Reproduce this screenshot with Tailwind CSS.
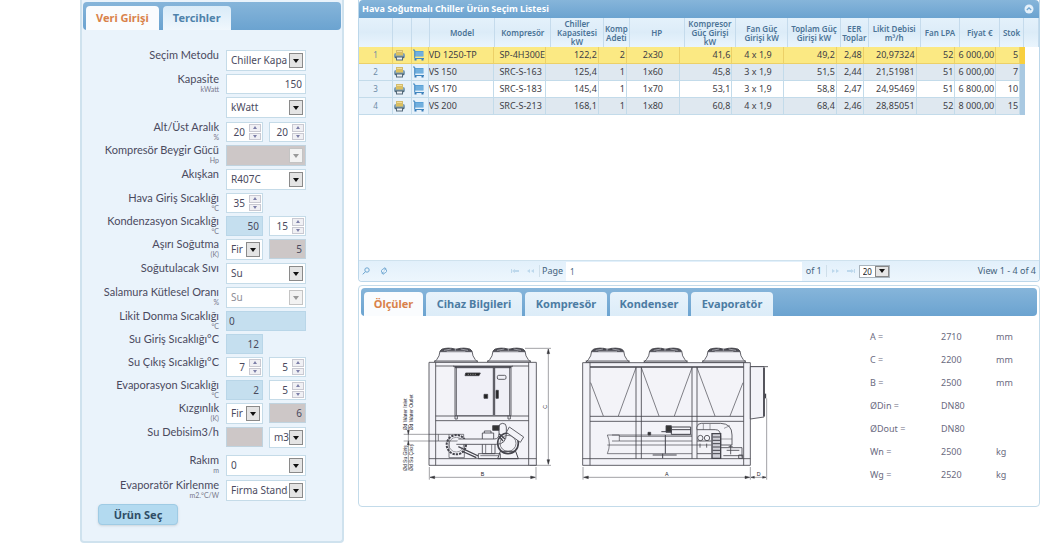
<!DOCTYPE html>
<html lang="tr">
<head>
<meta charset="utf-8">
<title>Chiller Seçim</title>
<script src="https://cdn.jsdelivr.net/npm/@tailwindcss/browser@4"></script>
</head>
<body class="bg-white font-['Noto_Sans',sans-serif] text-[#4a4a5e]">
<svg class="hidden">
  <symbol id="printer" viewBox="0 0 12 12">
    <path d="M2.500 1h7v4h-7z" fill="#d3bc6c"/><path d="M3.500 2h5v1h-5z" fill="#f2dd98"/>
    <rect x="0.500" y="4" width="11" height="5.500" rx="2" fill="#7f9fb5"/><path d="M2.500 4h7v2.500h-7z" fill="#dcc05e"/>
    <path d="M1.500 7.500h9v1.500h-9z" fill="#4f6472"/><path d="M2.500 8.500h7v3h-7z" fill="#54697a"/><path d="M3.500 8.500h5v2h-5z" fill="#eef3f7"/>
  </symbol>
  <symbol id="cart" viewBox="0 0 12 12">
    <path d="M2.500 2h8.500v5.500H2.500z" fill="#5aa2d8"/><path d="M0.500 1h1.700v8.500H11.500" fill="none" stroke="#3f86c0"/>
    <path d="M3 4h8M3 6h8" stroke="#a8d0ee" stroke-width=".6"/><path d="M2 10h2v1.500H2zM9 10h2v1.500H9z" fill="#3579b5"/>
  </symbol>
</svg>
<main class="flex items-start gap-3.5 pl-20 pr-[11px]">
  <section class="w-66 shrink-0 rounded-b border-2 border-t-0 border-[#cfe2ee] bg-[#eaf3fb] px-px pt-0.5 pb-4">
    <div role="tablist" class="flex h-7 items-end gap-1 rounded bg-gradient-to-b from-[#86b5da] to-[#6ba3d0] pl-[3px]">
      <button role="tab" aria-selected="true" class="h-6 rounded-t bg-[#fafcfe] px-2.5 text-[11px] font-bold text-[#d9824a]">Veri Girişi</button>
      <button role="tab" class="h-6 rounded-t bg-gradient-to-b from-[#d9ebf8] to-[#f0f7fd] px-2.5 text-[11px] font-bold text-[#4f83ab]">Tercihler</button>
    </div>
    <form id="fields" class="mt-5 pr-[35px]"></form>
    <button type="button" class="mt-px ml-[15px] block h-[21px] w-20 rounded border border-[#9fcbe4] bg-[#b3daf0] text-[11px] leading-4 font-bold text-[#2f4d66] shadow-sm">Ürün Seç</button>
  </section>

  <div class="min-w-0 flex-1">
    <section class="rounded-b border border-t-0 border-[#bcd7ea]">
      <header class="flex h-[18px] items-center justify-between rounded-t bg-gradient-to-b from-[#86b5da] to-[#6ba3d0] px-[3px]">
        <h2 class="text-[9px] font-bold text-white">Hava Soğutmalı Chiller Ürün Seçim Listesi</h2>
        <button aria-label="Daralt" class="mr-0.5"><svg class="size-2.5" viewBox="0 0 10 10"><circle cx="5" cy="5" r="4.500" fill="#e4f0fa"/><path d="M2.800 6 5 3.800 7.200 6" fill="none" stroke="#6ba3d0" stroke-width="1.200"/></svg></button>
      </header>
      <div class="min-h-[242px]">
        <table class="block w-full">
          <thead class="block"><tr id="head" class="grid h-[29px] grid-cols-[34fr_19fr_18fr_66fr_56fr_53fr_26fr_55fr_52fr_52fr_53fr_28fr_52fr_40fr_40fr_24fr_15fr] bg-gradient-to-b from-[#e4f1fb] via-[#dcecf8] to-[#eaf5fd]"></tr></thead>
          <tbody id="rows" class="block"></tbody>
        </table>
      </div>
      <footer class="flex h-[21px] items-center rounded-b border-t border-[#cfe2ee] bg-gradient-to-b from-[#e2f0fb] to-[#edf6fd] text-[9px] text-[#44637d]">
        <button aria-label="Ara" class="ml-[3px]"><svg class="size-2" viewBox="0 0 8 8" fill="none" stroke="#6ea6d0"><circle cx="5" cy="3" r="2.200"/><path d="M3.500 4.700.7 7.300"/></svg></button>
        <button aria-label="Yenile" class="ml-2.5"><svg class="size-2" viewBox="0 0 8 8" fill="none" stroke="#6ea6d0" stroke-width=".9"><path d="M1.500 5.500V3.500L3 1.800h3M4.500.3 6 1.800 4.500 3.200M6.500 2.500v2L5 6.200H2M3.500 4.700 2 6.200l1.500 1.500"/></svg></button>
        <button aria-label="İlk" class="ml-[123px]"><svg class="h-2 w-2" viewBox="0 0 8 8" fill="#bdd8ec"><path d="M0 2h1v4H0zM4 2v4L1 4zM4 3h4v2H4z"/></svg></button>
        <button aria-label="Önceki" class="ml-2"><svg class="h-2 w-2" viewBox="0 0 8 8" fill="#bdd8ec"><path d="M3 2v4L0 4zM7 2v4L4 4z"/></svg></button>
        <label for="page" class="ml-1 border-l border-[#cfdfea] pl-0.5 pr-[3px] text-[9px] leading-3">Page</label>
        <input id="page" value="1" class="h-[19px] min-w-0 flex-1 bg-white pl-1 text-[8px]">
        <span class="ml-1 border-r border-[#cfdfea] pr-1 text-[9px] leading-3">of 1</span>
        <button aria-label="Sonraki" class="ml-1"><svg class="h-2 w-2" viewBox="0 0 8 8" fill="#bdd8ec"><path d="M1 2v4l3-2zM5 2v4l3-2z"/></svg></button>
        <button aria-label="Son" class="ml-2"><svg class="h-2 w-2" viewBox="0 0 8 8" fill="#bdd8ec"><path d="M7 2h1v4H7zM4 2v4l3-2zM0 3h4v2H0z"/></svg></button>
        <span class="relative ml-1 h-[13px] w-[31px] border border-[#a9b4bd] bg-white"><select aria-label="Satır" class="block h-full w-full appearance-none pl-[3px] text-[8px] leading-[11px] text-[#222]"><option>20</option></select><span class="pointer-events-none absolute inset-y-0 right-0 flex w-3.5 items-center justify-center border border-[#888] bg-[#e6e6e6]"><svg class="w-1.5" viewBox="0 0 6 4"><path d="M0 0h6L3 4z" fill="#111"/></svg></span></span>
        <span class="ml-[88px] pr-[3px]">View 1 - 4 of 4</span>
      </footer>
    </section>

    <section class="mt-[3px] rounded border border-[#c3dbea] px-0.5 pt-0.5 pb-4">
      <div role="tablist" class="flex h-7 items-end gap-[3px] rounded bg-gradient-to-b from-[#86b5da] to-[#6ba3d0] pl-[3px] text-[11px] font-bold text-[#4c7ca3]">
        <button role="tab" aria-selected="true" class="h-6 w-[59px] rounded-t bg-[#fafcfe] text-[#d9824a]">Ölçüler</button>
        <button role="tab" class="h-6 w-24 rounded-t bg-gradient-to-b from-[#e8f3fb] to-[#dcecf8]">Cihaz Bilgileri</button>
        <button role="tab" class="h-6 w-[82px] rounded-t bg-gradient-to-b from-[#e8f3fb] to-[#dcecf8]">Kompresör</button>
        <button role="tab" class="h-6 w-[78px] rounded-t bg-gradient-to-b from-[#e8f3fb] to-[#dcecf8]">Kondenser</button>
        <button role="tab" class="h-6 w-[82px] rounded-t bg-gradient-to-b from-[#e8f3fb] to-[#dcecf8]">Evaporatör</button>
      </div>
      <div class="flex items-start justify-between pt-[9px] pl-[34px]">
        <svg class="mt-2.5 h-[155px] w-[390px] shrink-0" viewBox="0 0 1170 465" fill="none" stroke="#44444c" stroke-width="2.500" font-family="Liberation Sans">
          <defs>
            <g id="fan">
              <path d="M0 44 8 36Q17 26 18 10L24 4H108L114 10Q115 26 124 36L132 44Z" fill="#f3f3f8"/>
              <path d="M18 12H114" stroke-width="3"/><path d="M20 9Q30-1 54 2L66 6 78 2Q102-1 112 9Z" fill="#44444c"/>
              <path d="M30 8 52 4M64 9V1M80 4 102 8M38 11H94" stroke="#c8c8d0" stroke-width="2"/><path d="M0 40H132"/>
            </g>
          </defs>
          <use href="#fan" x="117" y="38"/><use href="#fan" x="276" y="38"/>
          <path d="M102 82H424V391H102ZM122 82V391M401 82V391M122 93H401M102 371H424M122 243H401M122 257H401" fill="#f3f3f8"/>
          <path d="M180 95H348V242H180ZM184 95V242M344 95V242" fill="#f0f0f7"/>
          <path d="M295 98V240M299 98V240M180 98H348" stroke-width="3"/>
          <path d="M176 92V95H352V92M180 242V252H187V242M339 242V252H346V242"/>
          <rect x="307" y="121" width="26" height="12" rx="4"/>
          <path d="M267 178H278V190H267ZM303 166H310V190H303Z" fill="#222"/>
          <path d="M212 114H256L252 122H210Z" fill="#222"/><path d="M218 118H246" stroke="#ddd" stroke-width="1.500" stroke-dasharray="4 3"/>
          <path d="M102 298H206V318H102M130 298V318M162 298V368H208V318" stroke-width="2"/>
          <circle cx="184" cy="329" r="29" stroke-width="6" stroke-dasharray="7 3"/><circle cx="184" cy="329" r="22" stroke-width="1.500"/>
          <path d="M190 312H298Q312 312 312 296V276Q312 265 323 265Q334 265 334 276V296Q334 328 304 328H184" fill="#f3f3f8"/>
          <path d="M262 312V294H296V312M268 294V288H288V294M262 328V356H300V328M250 356H316V371H250Z"/>
          <path d="M272 328V356M290 328V356M256 362H310" stroke-width="2"/>
          <path d="M190 335 250 363M200 348 244 368" stroke-width="4"/>
          <path d="M293 272H312V286H293Z" fill="#333"/>
          <circle cx="339" cy="325" r="31" stroke-width="5"/><circle cx="339" cy="325" r="24" stroke-width="2"/>
          <path d="M343 276 386 306 376 322 334 292Z" fill="#f3f3f8"/><path d="M316 349H362L370 371H308Z" stroke-width="3"/>
          <path d="M312 296 330 312M312 304 324 318" stroke-width="4"/>
          <g stroke-width="1.500">
            <path d="M390 40H468M404 391H468M460 42V388M103 396V434M423 396V434M105 427H421M40 270V406M26 298H102M26 318H102"/>
            <path d="M460 42 456 56H464ZM460 388 456 374H464ZM105 427 119 423V431ZM421 427 407 423V431ZM40 298 37 286H43ZM40 318 37 330H43Z" fill="#333"/>
          </g>
          <g fill="#26262e" stroke="none" font-size="16">
            <text x="257" y="423">B</text><text transform="translate(457 221) rotate(-90)">C</text>
            <text font-size="15" transform="translate(36 286) rotate(-90)">Ød Water Inlet</text><text font-size="15" transform="translate(54 286) rotate(-90)">Ød Water Outlet</text>
            <text font-size="15" transform="translate(36 408) rotate(-90)">Ød Su Giriş</text><text font-size="15" transform="translate(54 408) rotate(-90)">Ød Su Çıkış</text>
          </g>
          <g transform="translate(525 0)">
            <use href="#fan" x="47" y="38"/><use href="#fan" x="221" y="38"/><use href="#fan" x="396" y="38"/>
            <path d="M38 83H541V391H38Z" fill="#f3f3f8"/>
            <path d="M60 83V391M521 83V391M38 371H541M60 244H521M60 259H521"/><path d="M60 96H521" stroke-width="4"/>
            <path d="M198 96V371M214 96V371M366 96V371M381 96V371"/>
            <path d="M198 98 145 243M62 143 100 243M214 98 267 243M366 98 313 243M381 98 435 243M519 143 480 243" stroke-width="2"/>
            <path d="M541 95H594"/><path d="M541 95H582V246L541 252Z" fill="#f3f3f8"/><path d="M582 98V244" stroke-width="5"/><path d="M586 176V190" stroke-width="5"/>
            <path d="M112 300H366M112 356H366M112 300Q124 328 112 356M126 300H148V318H126M148 304H366M148 318H366M112 330H424" stroke-width="2"/>
            <path d="M234 292H242V300H234ZM288 272H304V292H288Z" fill="#333"/><path d="M304 276H362V298H304ZM304 284H362M274 290H304M278 356V370M248 360H320M286 300V356" stroke-width="3"/>
            <path d="M381 284V276Q382 265 394 265H452Q486 266 486 300V330H452V304Q452 284 436 284H381" fill="#f3f3f8"/>
            <path d="M400 267V284M420 267V284M462 280 480 272M452 312H486" stroke-width="1.500"/>
            <circle cx="391" cy="309" r="8"/><circle cx="411" cy="309" r="8"/><path d="M381 318H424M390 326V338M410 326V338M381 356H424"/>
            <path d="M426 296H452V370H426Z" fill="#d0d0d8" stroke-width="4"/><path d="M428 306H450M428 316H450M428 326H450M428 336H450M428 346H450M428 356H450" stroke-width="3"/>
            <path d="M452 338H516V368M470 346H508M482 330V358M476 334H488M460 362H516M506 360H518V370H506Z"/>
            <g stroke-width="1.500"><path d="M39 396V434M541 396V434M590 190V434M41 427H539M543 427H588"/><path d="M41 427 55 423V431ZM539 427 525 423V431ZM543 427 553 424V430ZM588 427 578 424V430Z" fill="#333"/></g>
            <g fill="#26262e" stroke="none" font-size="16"><text x="285" y="423">A</text><text x="560" y="423">D</text></g>
          </g>
        </svg>
        <table class="w-[167px] shrink-0 text-left text-[9px] text-[#6a6a80]">
          <tbody>
            <tr class="h-[23px]"><th class="w-[71px] font-normal">A =</th><td class="w-[55px]">2710</td><td>mm</td></tr>
            <tr class="h-[23px]"><th class="font-normal">C =</th><td>2200</td><td>mm</td></tr>
            <tr class="h-[23px]"><th class="font-normal">B =</th><td>2500</td><td>mm</td></tr>
            <tr class="h-[23px]"><th class="font-normal">ØDin =</th><td>DN80</td><td></td></tr>
            <tr class="h-[23px]"><th class="font-normal">ØDout =</th><td>DN80</td><td></td></tr>
            <tr class="h-[23px]"><th class="font-normal">Wn =</th><td>2500</td><td>kg</td></tr>
            <tr class="h-[23px]"><th class="font-normal">Wg =</th><td>2520</td><td>kg</td></tr>
          </tbody>
        </table>
      </div>
    </section>
  </div>
</main>
<script>
// Field kinds: s = select, t = text box, l = left-aligned text box, n = number with spinner
const WIDE = 'w-20', HALF = 'w-[37px]';
const tone = { white: 'bg-white border-[#c5dbe8]', blue: 'bg-[#c5dfef] border-[#b9d6e8]', grey: 'bg-[#cdc7c7] border-[#c0d3df]', off: 'bg-white border-[#c5dbe8] text-[#8d8d95]' };
const H = { a: 'h-[23px]', b: 'h-6', c: 'h-[25px]', d: 'h-7' };
const fields = [
  ['Seçim Metodu', '', 'b', ['s', 'Chiller Kapa', WIDE, 'white']],
  ['Kapasite', 'kWatt', 'a', ['t', '150', WIDE, 'white']],
  ['', '', 'c', ['s', 'kWatt', WIDE, 'white']],
  ['Alt/Üst Aralık', '%', 'a', ['n', '20', HALF, 'white'], ['n', '20', HALF, 'white']],
  ['Kompresör Beygir Gücü', 'Hp', 'b', ['s', '', WIDE, 'grey']],
  ['Akışkan', '', 'b', ['s', 'R407C', WIDE, 'white']],
  ['Hava Giriş Sıcaklığı', '°C', 'a', ['n', '35', HALF, 'white']],
  ['Kondenzasyon Sıcaklığı', '°C', 'a', ['t', '50', HALF, 'blue'], ['n', '15', HALF, 'white']],
  ['Aşırı Soğutma', '(K)', 'b', ['s', 'Fir', HALF, 'white'], ['t', '5', HALF, 'grey']],
  ['Soğutulacak Sıvı', '', 'b', ['s', 'Su', WIDE, 'white']],
  ['Salamura Kütlesel Oranı', '%', 'b', ['s', 'Su', WIDE, 'off']],
  ['Likit Donma Sıcaklığı', '°C', 'a', ['l', '0', WIDE, 'blue']],
  ['Su Giriş Sıcaklığı°C', '', 'a', ['t', '12', HALF, 'blue']],
  ['Su Çıkış Sıcaklığı°C', '', 'a', ['n', '7', HALF, 'white'], ['n', '5', HALF, 'white']],
  ['Evaporasyon Sıcaklığı', '°C', 'a', ['t', '2', HALF, 'blue'], ['n', '5', HALF, 'white']],
  ['Kızgınlık', '(K)', 'b', ['s', 'Fir', HALF, 'white'], ['t', '6', HALF, 'grey']],
  ['Su Debisim3/h', '', 'd', ['t', '', HALF, 'grey'], ['s', 'm3', HALF, 'white']],
  ['Rakım', 'm', 'c', ['s', '0', WIDE, 'white']],
  ['Evaporatör Kirlenme', 'm2.°C/W', 'a', ['s', 'Firma Standart', WIDE, 'white']],
];
const control = ([kind, value, width, color], id, name) => {
  const aria = `id="${id}" aria-label="${name || 'Birim'}"`;
  if (kind === 's') {
    const off = color === 'off' || color === 'grey';
    return `<span class="relative h-[21px] border ${width} ${tone[color]}"><select ${aria} ${off ? 'disabled' : ''} class="block h-full w-full appearance-none truncate pl-1 text-[10px] text-clip ${width === WIDE ? 'pr-[17px]' : 'pr-4'}"><option>${value}</option></select><span class="pointer-events-none absolute top-0.5 right-0.5 flex h-[15px] w-3.5 items-center justify-center border ${off ? 'border-[#c4c4c4] bg-[#f2f2f2] text-[#999]' : 'border-[#8a8a8a] bg-[#e4e4e4] text-[#111]'}"><svg class="w-1.5" viewBox="0 0 6 4"><path d="M0 0h6L3 4z" fill="currentColor"/></svg></span></span>`;
  }
  if (kind === 'n') return `<span class="flex h-5 items-center border pr-px ${width} ${tone[color]}"><input ${aria} value="${value}" class="min-w-0 flex-1 text-right text-[10px]"><span class="ml-1 flex h-4 w-3 flex-col gap-px text-[#7d7fa8]"><button type="button" aria-label="Artır" class="flex flex-1 items-center justify-center border border-[#c9c9d2] bg-[#f0f0f4]"><svg class="w-1" viewBox="0 0 4 3"><path d="M0 3h4L2 0z" fill="currentColor"/></svg></button><button type="button" aria-label="Azalt" class="flex flex-1 items-center justify-center border border-[#c9c9d2] bg-[#f0f0f4]"><svg class="w-1" viewBox="0 0 4 3"><path d="M0 0h4L2 3z" fill="currentColor"/></svg></button></span></span>`;
  return `<input ${aria} value="${value}" class="h-5 border text-[10px] ${kind === 'l' ? 'pl-0.5' : 'pr-[3px] text-right'} ${width} ${tone[color]}">`;
};
document.getElementById('fields').innerHTML = fields.map(([label, unit, h, ...controls], i) =>
  `<div class="flex items-start justify-end gap-[7px] ${H[h]}"><label for="f${i}-0" class="-mt-px flex flex-1 flex-col items-end font-[Lato] text-[11px] leading-3 whitespace-nowrap">${label}<small class="text-[7px] leading-[9px] text-[#77778a]">${unit}</small></label><div class="flex w-20 justify-between">${controls.map((c, j) => control(c, `f${i}-${j}`, label)).join('')}</div></div>`).join('');

const heads = ['', '', '', 'Model', 'Kompresör', 'Chiller Kapasitesi kW', 'Komp Adeti', 'HP', 'Kompresor Güç Girişi kW', 'Fan Güç Girişi kW', 'Toplam Güç Girişi kW', 'EER Toplar', 'Likit Debisi m³/h', 'Fan LPA', 'Fiyat €', 'Stok', ''];
document.getElementById('head').innerHTML = heads.map(t => `<th class="flex min-w-0 items-center justify-center overflow-hidden border-r border-[#c5dbec] text-center text-[8px] leading-[9px] font-semibold text-[#4b7396]">${t}</th>`).join('');
const data = [
  ['VD 1250-TP', 'SP-4H300E', '122,2', '2', '2x30', '41,6', '4 x 1,9', '49,2', '2,48', '20,97324', '52', '6 000,00', '5'],
  ['VS 150', 'SRC-S-163', '125,4', '1', '1x60', '45,8', '3 x 1,9', '51,5', '2,44', '21,51981', '51', '6 000,00', '7'],
  ['VS 170', 'SRC-S-183', '145,4', '1', '1x70', '53,1', '3 x 1,9', '58,8', '2,47', '24,95469', '51', '6 800,00', '10'],
  ['VS 200', 'SRC-S-213', '168,1', '1', '1x80', '60,8', '4 x 1,9', '68,4', '2,46', '28,85051', '52', '8 000,00', '15'],
];
const align = ['', 'pl-[5px]', 'pr-px text-right', 'pr-px text-right', 'pl-4', 'pr-px text-right', 'pl-3', 'pr-px text-right', 'pr-px text-right', 'pr-px text-right', 'pr-px text-right', 'pr-px text-right', 'pr-px text-right'];
document.getElementById('rows').innerHTML = data.map((r, i) => {
  const bg = i === 0 ? 'bg-[#fbe983] border-[#ecd068]' : i % 2 ? 'bg-[#dfe8f0] border-[#c3dbea]' : 'bg-white border-[#c3dbea]';
  const side = i ? 'bg-[#e6f1fa] border-[#c3dbea]' : 'bg-[#fbe983] border-[#ecd068]';
  return `<tr class="grid h-[17px] grid-cols-[34fr_19fr_17fr_66fr_52fr_53fr_28fr_53fr_53fr_52fr_53fr_27fr_53fr_39fr_41fr_24fr_5fr_14fr]"><th scope="row" class="flex items-center justify-center border-r border-b text-[8px] font-normal text-[#6d8ca6] ${side}">${i + 1}</th>`
    + ['printer', 'cart'].map(n => `<td class="flex items-center border-r border-b ${side}"><svg class="h-3 w-[13px]"><use href="#${n}"/></svg></td>`).join('')
    + r.map((v, j) => `<td class="min-w-0 overflow-hidden border-r border-b text-[9px] leading-4 whitespace-nowrap text-[#3e3e46] ${align[j]} ${bg}">${v}</td>`).join('')
    + `<td class="${i ? 'bg-[#a9c9e2]' : 'bg-[#f8cf3e]'}"></td></tr>`;
}).join('');
</script>
</body>
</html>
